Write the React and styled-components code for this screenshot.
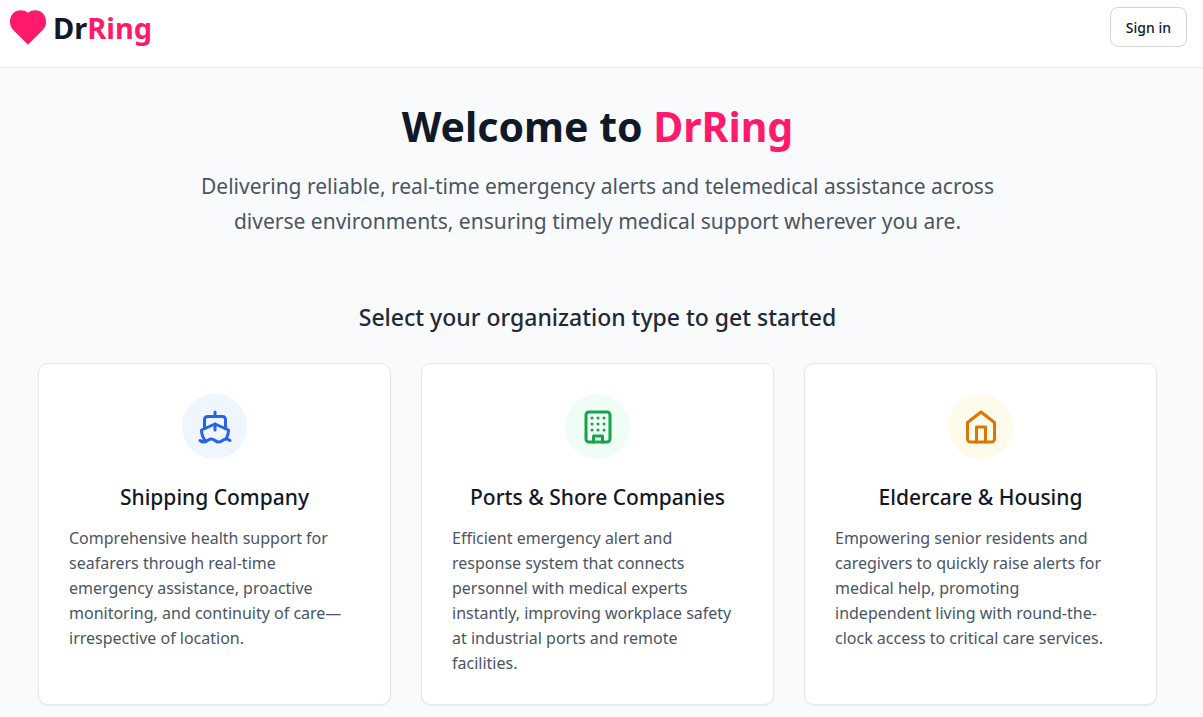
import React from 'react'
import styled, { createGlobalStyle } from 'styled-components'

const GlobalStyle = createGlobalStyle`
  * { box-sizing: border-box; }
  body { margin: 0; background: #f9fafb; color: #111827; font-family: "Noto Sans", "Open Sans", sans-serif; }
  h1, h2, h3, p { margin: 0; }
`

const Header = styled.header`
  display: flex;
  align-items: flex-start;
  justify-content: space-between;
  height: 68px;
  padding: 7px 16px 0 8px;
  background: #fff;
  border-bottom: 1px solid #e5e7eb;
`
const Logo = styled.a`
  display: flex;
  align-items: center;
  gap: 5px;
  color: #111827;
  font-size: 29px;
  line-height: 42px;
  font-weight: 700;
  text-decoration: none;
`
const Pink = styled.span`color: #ff1a6c;`
const SignIn = styled.button`
  height: 40px;
  padding: 0 15px;
  border: 1px solid #d1d5db;
  border-radius: 8px;
  background: #fff;
  color: #111827;
  font-family: inherit;
  font-size: 14px;
  font-weight: 500;
  cursor: pointer;
`
const Main = styled.main`
  padding: 31px 46px 12px 38px;
`
const Hero = styled.section`
  max-width: 840px;
  margin: 0 auto;
  text-align: center;
`
const Title = styled.h1`
  font-size: 41px;
  line-height: 54px;
  font-weight: 700;
`
const Lead = styled.p`
  margin-top: 16px;
  color: #4b5563;
  font-size: 21px;
  line-height: 35px;
`
const Subtitle = styled.h2`
  margin: 60px 0 28px;
  color: #1f2937;
  text-align: center;
  font-size: 23px;
  line-height: 36px;
  font-weight: 500;
`
const Cards = styled.div`
  display: grid;
  grid-template-columns: repeat(3, 1fr);
  gap: 30px;
`
const Card = styled.article`
  padding: 30px 30px 28px;
  border: 1px solid #e5e7eb;
  border-radius: 10px;
  background: #fff;
  box-shadow: 0 1px 2px rgba(0, 0, 0, 0.06);
`
const IconCircle = styled.div`
  display: flex;
  align-items: center;
  justify-content: center;
  width: 65px;
  height: 65px;
  margin: 0 auto;
  border-radius: 50%;
  background: ${(p) => p.$bg};
  color: ${(p) => p.$color};
`
const CardTitle = styled.h3`
  margin: 22px 0 13px;
  text-align: center;
  font-size: 21px;
  line-height: 32px;
  font-weight: 500;
`
const CardText = styled.p`
  padding-right: 9px;
  color: #4b5563;
  font-size: 16px;
  line-height: 25px;
`

const Icon = ({ children }) => (
  <svg width="36" height="36" viewBox="0 0 24 24" fill="none" stroke="currentColor" strokeWidth="2" strokeLinecap="round" strokeLinejoin="round" aria-hidden="true">
    {children}
  </svg>
)

const ShipIcon = () => (
  <Icon>
    <path d="M12 10v4M12 2v3" />
    <path d="M19 13V7a2 2 0 0 0-2-2H7a2 2 0 0 0-2 2v6" />
    <path d="M19.38 20A11.6 11.6 0 0 0 21 14l-9-4-9 4c0 2.9.94 5.34 2.81 7.76" />
    <path d="M2 21c.6.5 1.2 1 2.5 1 2.5 0 2.5-2 5-2 1.3 0 1.9.5 2.5 1s1.2 1 2.5 1c2.5 0 2.5-2 5-2 1.3 0 1.9.5 2.5 1" />
  </Icon>
)

const BuildingIcon = () => (
  <Icon>
    <rect x="4" y="2" width="16" height="20" rx="2" />
    <path d="M9 22v-4h6v4M8 6h.01M16 6h.01M12 6h.01M12 10h.01M12 14h.01M16 10h.01M16 14h.01M8 10h.01M8 14h.01" />
  </Icon>
)

const HouseIcon = () => (
  <Icon>
    <path d="m3 9 9-7 9 7v11a2 2 0 0 1-2 2H5a2 2 0 0 1-2-2z" />
    <path d="M9 22V12h6v10" />
  </Icon>
)

const organizations = [
  {
    title: 'Shipping Company',
    text: 'Comprehensive health support for seafarers through real-time emergency assistance, proactive monitoring, and continuity of care—irrespective of location.',
    icon: <ShipIcon />,
    color: '#2563eb',
    bg: '#eff6ff',
  },
  {
    title: 'Ports & Shore Companies',
    text: 'Efficient emergency alert and response system that connects personnel with medical experts instantly, improving workplace safety at industrial ports and remote facilities.',
    icon: <BuildingIcon />,
    color: '#16a34a',
    bg: '#f0fdf4',
  },
  {
    title: 'Eldercare & Housing',
    text: 'Empowering senior residents and caregivers to quickly raise alerts for medical help, promoting independent living with round-the-clock access to critical care services.',
    icon: <HouseIcon />,
    color: '#d97706',
    bg: '#fffbeb',
  },
]

const App = () => {
  return (
    <>
      <GlobalStyle />
      <Header>
        <Logo href="#">
          <svg width="40" height="40" viewBox="0 0 24 24" fill="#ff1a6c" aria-hidden="true">
            <path d="M12 22 3.300 13.300A6.600 6.600 0 0 1 1.200 8.100C1.200 4.300 4 1.400 7.600 1.400c1.700 0 3.100.5 4.400 1.500 1.300-1 2.700-1.500 4.400-1.500 3.600 0 6.400 2.900 6.400 6.700a6.600 6.600 0 0 1-2.100 5.200z" />
          </svg>
          <span>Dr<Pink>Ring</Pink></span>
        </Logo>
        <SignIn type="button">Sign in</SignIn>
      </Header>
      <Main>
        <Hero>
          <Title>Welcome to <Pink>DrRing</Pink></Title>
          <Lead>
            Delivering reliable, real-time emergency alerts and telemedical assistance across diverse environments, ensuring timely medical support wherever you are.
          </Lead>
        </Hero>
        <Subtitle>Select your organization type to get started</Subtitle>
        <Cards>
          {organizations.map((org) => (
            <Card key={org.title}>
              <IconCircle $bg={org.bg} $color={org.color}>{org.icon}</IconCircle>
              <CardTitle>{org.title}</CardTitle>
              <CardText>{org.text}</CardText>
            </Card>
          ))}
        </Cards>
      </Main>
    </>
  )
}

export default App
